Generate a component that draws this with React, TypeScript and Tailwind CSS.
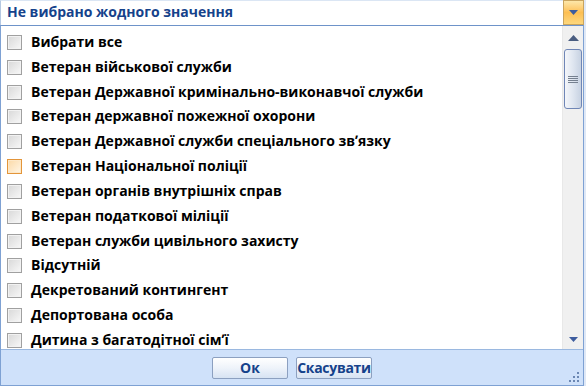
import React from "react";

const items = [
  "Вибрати все",
  "Ветеран військової служби",
  "Ветеран Державної кримінально-виконавчої служби",
  "Ветеран державної пожежної охорони",
  "Ветеран Державної служби спеціального зв'язку",
  "Ветеран Національної поліції",
  "Ветеран органів внутрішніх справ",
  "Ветеран податкової міліції",
  "Ветеран служби цивільного захисту",
  "Відсутній",
  "Декретований контингент",
  "Депортована особа",
  "Дитина з багатодітної сім'ї",
];

function Check({ hot }: { hot?: boolean }) {
  return (
    <div
      className={
        hot
          ? "w-[15px] h-[15px] border border-[#e3953a] bg-gradient-to-br from-[#fbd9a6] to-[#fff6e6] shrink-0"
          : "w-[15px] h-[15px] border border-[#a0a0a0] bg-gradient-to-br from-[#d8d8d8] to-[#f8f8f8] shrink-0"
      }
    >
      <div className={hot ? "w-full h-full border border-[#fde8c8]" : "w-full h-full border border-[#f2f2f2]"} />
    </div>
  );
}

export default function App() {
  return (
    <div
      className="w-[586px] h-[386px] relative bg-[#dfe8f6] overflow-hidden flex flex-col"
      style={{ fontFamily: '"Open Sans", "Noto Sans", sans-serif' }}
    >
      {/* combo */}
      <div className="h-[25px] flex shrink-0 bg-white">
        <div className="flex-1 border-t border-[#dbe6f4] border-l border-l-[#b5c8e2] flex items-center pl-[6px] text-[14px] font-bold text-[#15428b] leading-none pb-[2px]">
          Не вибрано жодного значення
        </div>
        <div className="w-[21px] border border-[#c9a45e] bg-gradient-to-b from-[#fde7a8] via-[#fdbf52] to-[#fdd77c] flex items-center justify-center">
          <svg width="9" height="5" viewBox="0 0 9 5">
            <path d="M0 0 H9 L4.5 5 Z" fill="#3d5c9e" />
          </svg>
        </div>
        <div className="w-[2px] bg-[#dfe8f6]" />
      </div>
      {/* popup */}
      <div className="flex flex-1 min-h-0">
        <div className="w-[584px] flex flex-col border border-[#7ea1d3] border-t-[#6e93c9]">
          <div className="flex flex-1 min-h-0 bg-white">
            <div className="flex-1 overflow-hidden pt-[4px] pl-[6px]">
              {items.map((t, i) => (
                <div key={i} className="h-[24.83px] flex items-center gap-[9px] shrink-0">
                  <Check hot={i === 5} />
                  <span className="text-[14px] font-bold text-black whitespace-nowrap leading-none pb-[1px]">
                    {t.replace("'", "ʼ")}
                  </span>
                </div>
              ))}
            </div>
            <div className="w-[21px] bg-[#f0f0f0] border-l border-l-[#e8e8e8] flex flex-col items-center pt-[9px]">
              <svg width="11" height="6" viewBox="0 0 11 6" className="mb-[8px]">
                <path d="M0 6 L5.5 0 L11 6 Z" fill="#4a5d80" />
              </svg>
              <div className="w-[18px] h-[60px] rounded-[3px] border border-[#6f86b6] bg-gradient-to-r from-[#f4f6fa] via-[#dfe6f0] to-[#c7d2e2] flex flex-col items-center justify-center gap-[1px]">
                <div className="w-[10px] h-[1px] bg-[#75808f]" />
                <div className="w-[10px] h-[1px] bg-[#75808f]" />
                <div className="w-[10px] h-[1px] bg-[#75808f]" />
                <div className="w-[10px] h-[1px] bg-[#75808f]" />
              </div>
              <div className="flex-1" />
              <svg width="9" height="5" viewBox="0 0 9 5" className="mb-[7px]">
                <path d="M0 0 H9 L4.5 5 Z" fill="#3d5c9e" />
              </svg>
            </div>
          </div>
          <div className="h-[36px] shrink-0 bg-[#cfe1fa] border-t border-[#9ab8e0] flex items-center justify-center gap-[8px] relative">
            <button className="w-[76px] h-[22px] rounded-[2px] border border-[#8ca0c0] bg-gradient-to-b from-[#ffffff] via-[#eef3fa] to-[#d7e3f3] text-[14px] font-bold text-[#15428b] leading-none">
              Ок
            </button>
            <button className="w-[76px] h-[22px] rounded-[2px] border border-[#8ca0c0] bg-gradient-to-b from-[#ffffff] via-[#eef3fa] to-[#d7e3f3] text-[14px] font-bold text-[#15428b] leading-none tracking-[-0.3px]">
              Скасувати
            </button>
            <svg width="11" height="11" viewBox="0 0 11 11" className="absolute right-[3px] bottom-[2px]">
              {[
                [8, 0],
                [4, 4],
                [8, 4],
                [0, 8],
                [4, 8],
                [8, 8],
              ].map(([x, y], k) => (
                <rect key={k} x={x} y={y} width="2" height="2" fill="#6b87b3" />
              ))}
            </svg>
          </div>
        </div>
        <div className="flex-1 bg-[#dfe8f6]" />
      </div>
    </div>
  );
}
